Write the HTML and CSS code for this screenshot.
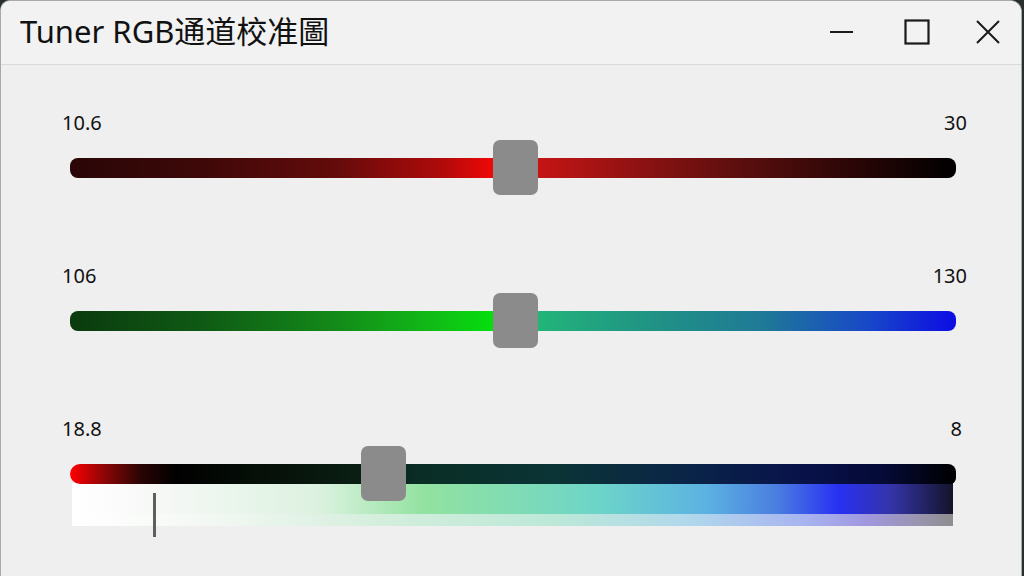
FILE: index.html
```html
<!DOCTYPE html>
<html lang="zh">
<head>
<meta charset="utf-8">
<title>Tuner RGB通道校准圖</title>
<link rel="stylesheet" href="styles.css">
</head>
<body>
<div class="window">
  <div class="titlebar">
    <div class="title">Tuner RGB通道校准圖</div>
    <div class="controls">
      <div class="ctrl min">
        <svg width="24" height="24" viewBox="0 0 24 24"><line x1="1" y1="12" x2="24" y2="12" stroke="#1a1a1a" stroke-width="2.2"/></svg>
      </div>
      <div class="ctrl max">
        <svg width="26" height="26" viewBox="0 0 26 26"><rect x="1.5" y="1.5" width="23" height="23" fill="none" stroke="#1a1a1a" stroke-width="2.2"/></svg>
      </div>
      <div class="ctrl close">
        <svg width="24" height="24" viewBox="0 0 24 24"><path d="M1 1 L23 23 M23 1 L1 23" stroke="#1a1a1a" stroke-width="2" fill="none"/></svg>
      </div>
    </div>
  </div>
  <div class="content">
    <div class="slider">
      <div class="labels"><span>10.6</span><span>30</span></div>
      <div class="track red">
        <div class="thumb" style="left: 423px"></div>
      </div>
    </div>
    <div class="slider">
      <div class="labels"><span>106</span><span>130</span></div>
      <div class="track green">
        <div class="thumb" style="left: 423px"></div>
      </div>
    </div>
    <div class="slider">
      <div class="labels"><span>18.8</span><span class="r8">8</span></div>
      <div class="track mix">
        <div class="thumb" style="left: 291px"></div>
      </div>
      <div class="spectrum">
        <div class="spec-main"></div>
        <div class="spec-light"></div>
        <div class="marker"></div>
      </div>
    </div>
  </div>
</div>
</body>
</html>
```
FILE: styles.css
```css
html, body {
  margin: 0;
  padding: 0;
  width: 1024px;
  height: 576px;
  overflow: hidden;
  background: #27302a;
}

.window {
  box-sizing: border-box;
  width: 1022px;
  height: 576px;
  background: #efefef;
  border: 1px solid #a9a9a9;
  border-bottom: none;
  border-radius: 10px 12px 0 0;
  overflow: hidden;
  font-family: "Noto Sans", "Noto Sans CJK TC", "Noto Sans CJK SC", sans-serif;
  color: #111;
}

.titlebar {
  height: 63px;
  background: #f2f2f2;
  border-bottom: 1px solid #d9d9d9;
  display: flex;
  align-items: center;
  justify-content: space-between;
}

.title {
  padding-left: 19px;
  padding-bottom: 3px;
  font-size: 31px;
  line-height: 36px;
  color: #111;
}

.controls {
  display: flex;
  align-items: center;
  padding-bottom: 2px;
}

.ctrl {
  height: 40px;
  display: flex;
  align-items: center;
  justify-content: center;
}

.min { width: 76px; }
.max { width: 76px; }
.close { width: 66px; }

.content {
  padding-top: 46px;
}

.slider {
  height: 153px;
}

.labels {
  display: flex;
  justify-content: space-between;
  padding: 0 54px 0 61px;
  font-size: 20px;
  line-height: 24px;
  height: 24px;
}

.r8 { padding-right: 5px; }

.track {
  position: relative;
  z-index: 1;
  margin: 23px 65px 0 69px;
  height: 20px;
  border-radius: 8px;
}

.thumb {
  position: absolute;
  z-index: 2;
  top: -18px;
  width: 45px;
  height: 55px;
  background: #8b8b8b;
  border-radius: 7px;
}

.red {
  background: linear-gradient(to right,
    #2a0606 0%, #3e0808 15%, #640b0b 30%, #b00a0a 42%, #f20808 48%,
    #c41414 53%, #8a1212 65%, #5a0e0e 76%, #2c0606 88%, #000 100%);
}

.green {
  background: linear-gradient(to right,
    #0b3a0e 0%, #0f5a14 15%, #138a19 30%, #10c016 42%, #04e00c 48%,
    #22b47a 53%, #209484 65%, #1f7a96 78%, #1848c8 90%, #0c0ce4 100%);
}

.mix {
  border-radius: 10px 8px 6px 10px;
  background: linear-gradient(to right,
    #ff0000 0%, #8a0606 4%, #2a0404 8%, #000 12%, #061008 22%, #0a1f14 33%,
    #0a2e26 40%, #0b3436 55%, #0a2448 70%, #08124a 83%, #050a36 92%, #000 100%);
}

.spectrum {
  position: relative;
  margin: -1px 68px 0 71px;
  height: 43px;
}

.spec-main {
  height: 31px;
  background: linear-gradient(to right,
    #ffffff 0%, #f6f8f6 10%, #dcf2e0 28%, #92e2a0 40%, #80dcb4 50%,
    #6cd4c8 60%, #5cb2e2 72%, #4a7ee0 80%, #2830f2 87%, #3434a8 93%, #14142a 100%);
}

.spec-light {
  height: 12px;
  background: linear-gradient(to right,
    #ffffff 0%, #f4f8f4 15%, #d4eedc 35%, #bce8d8 55%, #b0d8ec 70%,
    #a8b4f0 83%, #a098e0 90%, #9a94b0 96%, #8e8e8e 100%);
}

.marker {
  position: absolute;
  left: 81px;
  top: 10px;
  width: 3px;
  height: 44px;
  background: #5f5f5f;
}
```
